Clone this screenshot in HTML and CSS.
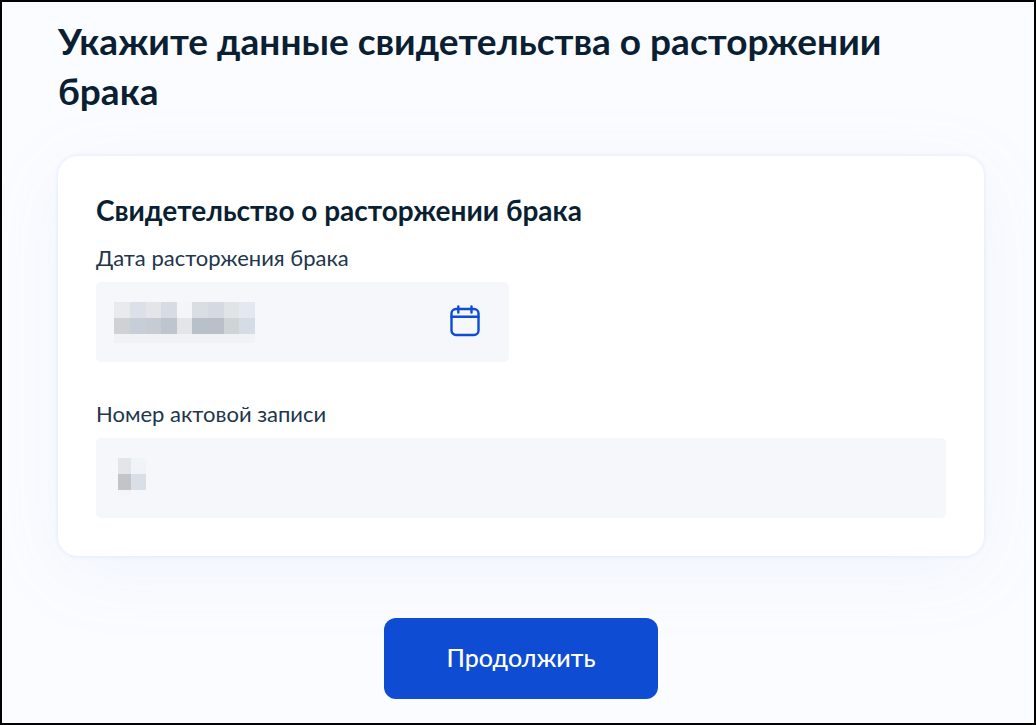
FILE: index.html
```html
<!DOCTYPE html>
<html lang="ru">
<head>
<meta charset="utf-8">
<meta name="viewport" content="width=device-width, initial-scale=1">
<title>Свидетельство о расторжении брака</title>
<link rel="stylesheet" href="styles.css">
</head>
<body>
<main class="page">
  <h1 class="page-title">Укажите данные свидетельства о расторжении брака</h1>
  <form class="form">
    <section class="card">
      <h2 class="card-title">Свидетельство о расторжении брака</h2>
      <div class="field field-date">
        <label class="label" for="date">Дата расторжения брака</label>
        <div class="control">
          <input class="input" id="date" type="text">
          <svg class="mask mask-date" width="142" height="42" viewBox="0 0 142 42" shape-rendering="crispEdges" aria-hidden="true">
            <path fill="#e8eaec" d="M0 0h16v16H0z"/><path fill="#dce0e8" d="M16 0h16v16H16z"/><path fill="#e3e5e9" d="M32 0h15v16H32z"/><path fill="#d7dbe2" d="M47 0h16v16H47z"/><path fill="#f3f5f9" d="M63 0h15v16H63z"/><path fill="#d9dee3" d="M78 0h16v16H78z"/><path fill="#d5d9e1" d="M94 0h16v16H94z"/><path fill="#e0e4e7" d="M110 0h15v16H110z"/><path fill="#e4e8f0" d="M125 0h16v16H125z"/>
            <path fill="#cfd2d5" d="M0 16h16v16H0z"/><path fill="#c7ced8" d="M16 16h16v16H16z"/><path fill="#c7ccd4" d="M32 16h15v16H32z"/><path fill="#bec5cf" d="M47 16h16v16H47z"/><path fill="#e3e5e9" d="M63 16h15v16H63z"/><path fill="#b8c1ca" d="M78 16h16v16H78z"/><path fill="#babfc9" d="M94 16h16v16H94z"/><path fill="#cfd4d6" d="M110 16h15v16H110z"/><path fill="#d5dce6" d="M125 16h16v16H125z"/>
            <path fill="#f0f2f5" d="M0 32h141v9H0z"/>
          </svg>
          <button class="calendar" type="button" aria-label="Открыть календарь">
            <svg width="32" height="34" viewBox="0 0 32 34" fill="none" stroke="#0d4cd3" stroke-width="2.4" stroke-linecap="round" aria-hidden="true">
              <rect x="2.5" y="5" width="27" height="26" rx="4.5"/>
              <path d="M2.5 12.7h27M9.3 2.5v6M22.5 2.5v6"/>
            </svg>
          </button>
        </div>
      </div>
      <div class="field">
        <label class="label" for="number">Номер актовой записи</label>
        <div class="control">
          <input class="input" id="number" type="text">
          <svg class="mask mask-number" width="30" height="38" viewBox="0 0 30 38" shape-rendering="crispEdges" aria-hidden="true">
            <path fill="#e3e6e9" d="M0 0h13v16H0z"/><path fill="#f0f4f8" d="M13 0h15v16H13z"/><path fill="#c2c4c8" d="M0 16h13v16H0z"/><path fill="#d8dfe7" d="M13 16h15v16H13z"/><path fill="#f3f5f9" d="M0 32h13v5H0z"/>
          </svg>
        </div>
      </div>
    </section>
    <button class="submit" type="button">Продолжить</button>
  </form>
</main>
</body>
</html>
```
FILE: styles.css
```css
* {
  box-sizing: border-box;
}

body {
  margin: 0;
  min-height: 100vh;
  border: 2px solid #000;
  background: #fbfcff;
  color: #0b1f33;
  font-family: Lato, "Open Sans", sans-serif;
  overflow: hidden;
}

.page {
  padding: 14px 50px 24px 56px;
}

.page-title {
  margin: 0 0 40px;
  font-size: 37px;
  line-height: 50px;
  font-weight: 700;
}

.form {
  display: flex;
  flex-direction: column;
  gap: 62px;
}

.card {
  padding: 36px 38px 38px;
  border-radius: 20px;
  background: #fff;
  box-shadow: 0 0 4px rgba(66, 120, 220, 0.14), 0 16px 80px rgba(100, 150, 230, 0.08);
}

.card-title {
  margin: 0 0 14px;
  font-size: 28px;
  line-height: 36px;
  font-weight: 700;
}

.field {
  display: flex;
  flex-direction: column;
  gap: 8px;
}

.field-date {
  width: 413px;
  max-width: 100%;
  margin-bottom: 36px;
}

.label {
  color: #21364b;
  font-size: 22px;
  line-height: 32px;
}

.control {
  position: relative;
  display: flex;
}

.input {
  flex: 1;
  min-width: 0;
  height: 80px;
  padding: 0 20px;
  border: 0;
  border-radius: 5px;
  background: #f5f7fb;
  color: inherit;
  font: inherit;
  font-size: 26px;
}

.mask {
  position: absolute;
  top: 20px;
  pointer-events: none;
}

.mask-date {
  left: 18px;
}

.mask-number {
  left: 22px;
}

.calendar {
  position: absolute;
  top: 22px;
  right: 28px;
  padding: 0;
  border: 0;
  background: none;
  line-height: 0;
}

.submit {
  align-self: center;
  padding: 16px 62px 18px;
  border: 0;
  border-radius: 12px;
  background: #0d4cd3;
  color: #fff;
  font: 500 25px/47px Lato, "Open Sans", sans-serif;
}
```
